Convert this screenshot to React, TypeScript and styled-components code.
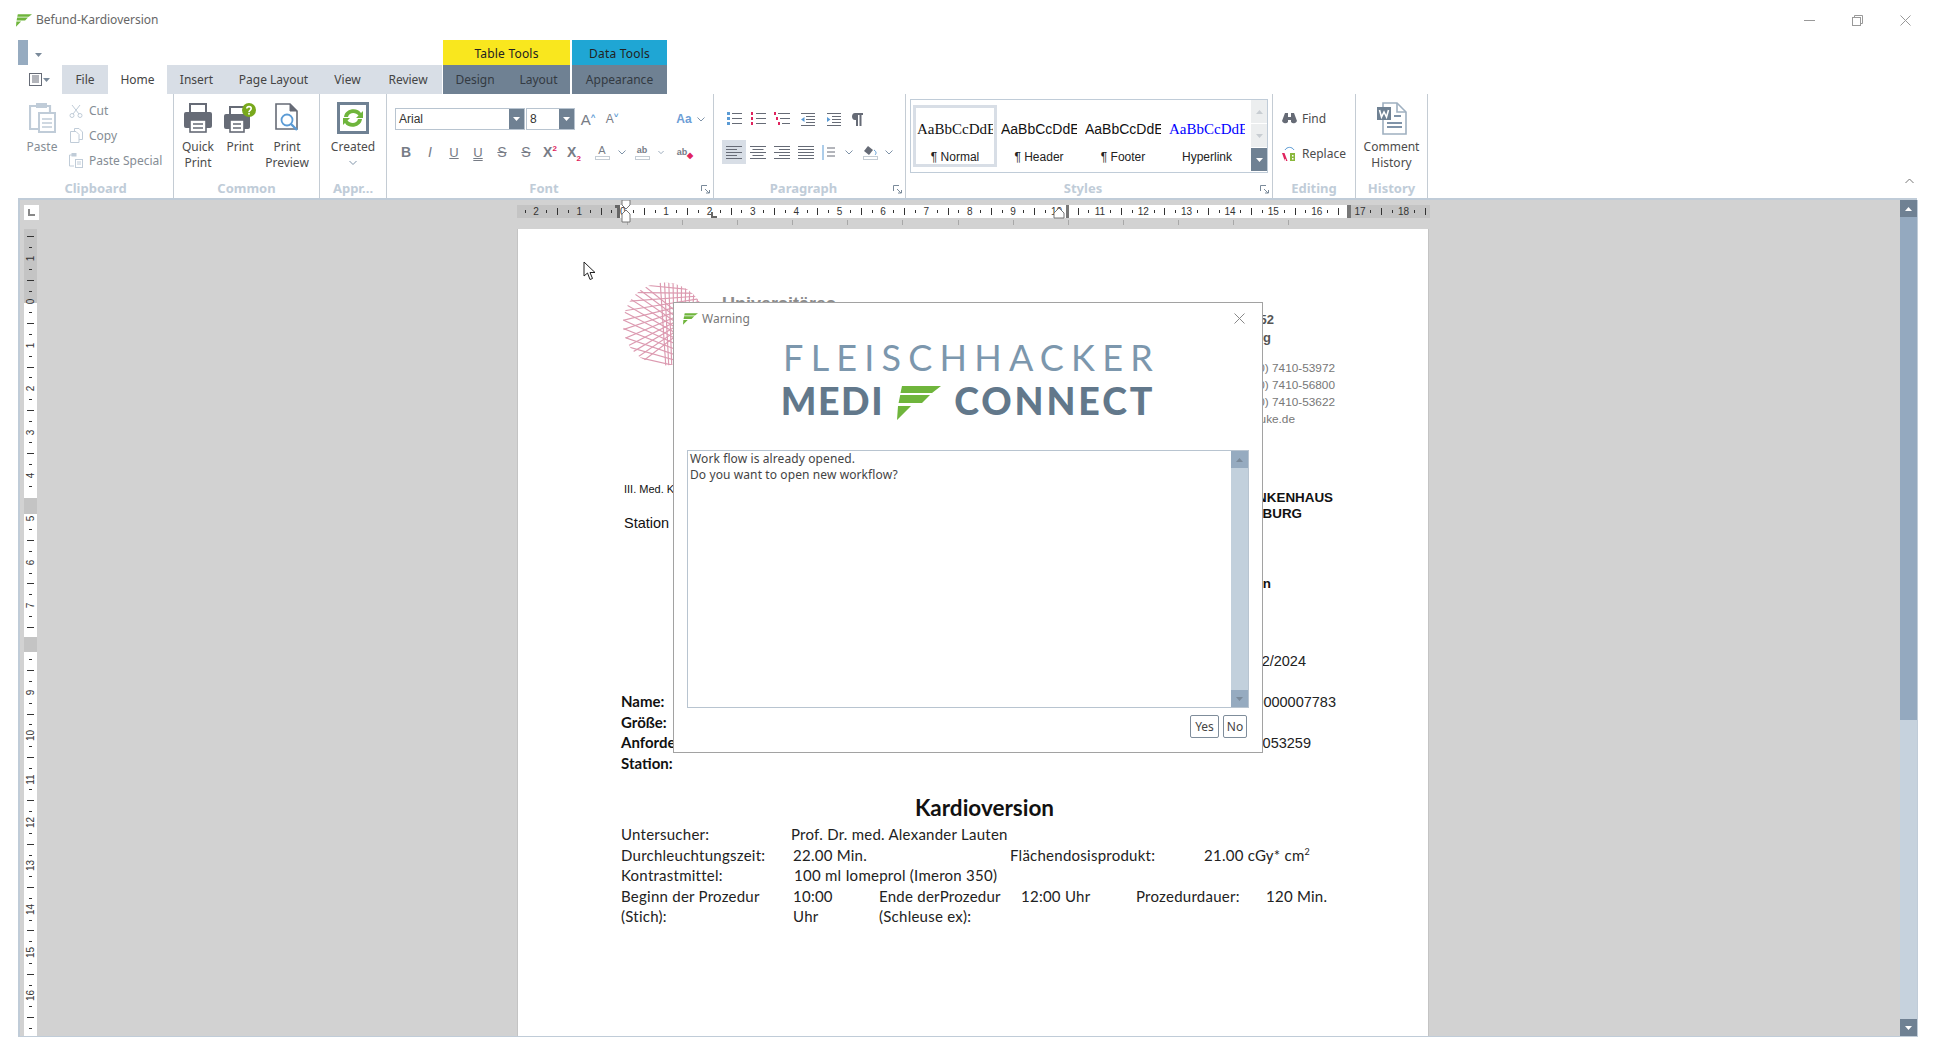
import React from 'react'
import styled, { createGlobalStyle } from 'styled-components'

const uiFont = `"Noto Sans", "Open Sans", sans-serif`
const armFont = `"Liberation Sans", Arial, sans-serif`
const docFont = `Lato, "Open Sans", sans-serif`

const GlobalStyle = createGlobalStyle`
    html, body {
        margin: 0;
        padding: 0;
        background: #fff;
        overflow: hidden;
    }
    * {
        box-sizing: border-box;
    }
`

const Shell = styled.div`
    position: relative;
    width: 1936px;
    height: 1056px;
    display: flex;
    flex-direction: column;
    font-family: ${uiFont};
    font-size: 12px;
    color: #4c4c4c;
    background: #fff;
`

/* window title */
const TitleBar = styled.div`
    height: 40px;
    display: flex;
    align-items: center;
    padding: 0 25px 0 16px;
    gap: 4px;
`
const TitleText = styled.span`
    color: #666;
    margin-bottom: 2px;
`
const WindowButtons = styled.div`
    margin-left: auto;
    display: flex;
    gap: 37px;
    align-items: center;
`

/* quick access + contextual headers */
const ContextRow = styled.div`
    height: 25px;
    padding-left: 18px;
    display: flex;
`
const QuickBlock = styled.div`
    width: 10px;
    background: #96abc0;
`
const QuickArrow = styled.div`
    width: 415px;
    padding: 4px 0 0 7px;
`
const ContextHead = styled.div<{ $w: number; $bg: string }>`
    width: ${p => p.$w}px;
    margin-right: 2px;
    padding-top: 1px;
    background: ${p => p.$bg};
    color: #222;
    letter-spacing: 0.2px;
    display: flex;
    align-items: center;
    justify-content: center;
`

/* tabs */
const TabRow = styled.div`
    height: 29px;
    padding-left: 18px;
    display: flex;
`
const ViewToggle = styled.div`
    width: 44px;
    display: flex;
    align-items: center;
    padding-left: 11px;
    gap: 1px;
`
const Tab = styled.div<{ $w: number; $kind?: 'active' | 'context' }>`
    width: ${p => p.$w}px;
    display: flex;
    align-items: center;
    justify-content: center;
    color: ${p => (p.$kind === 'context' ? '#333a42' : '#444')};
    background: ${p => (p.$kind === 'active' ? '#fff' : p.$kind === 'context' ? '#6f8193' : '#d8dee6')};
`
const TabGap = styled.div<{ $w: number }>`
    width: ${p => p.$w}px;
`

/* ribbon */
const Ribbon = styled.div`
    height: 104px;
    padding-left: 18px;
    display: flex;
`
const Group = styled.div<{ $w: number }>`
    position: relative;
    width: ${p => p.$w}px;
    border-right: 1px solid #c4ccd4;
    display: flex;
    flex-direction: column;
`
const GroupBody = styled.div<{ $pad?: string }>`
    flex: 1;
    display: flex;
    padding: ${p => p.$pad || '0'};
`
const GroupLabel = styled.div<{ $launch?: boolean }>`
    height: 20px;
    line-height: 21px;
    padding-right: ${p => (p.$launch ? 12 : 0)}px;
    text-align: center;
    font-size: 13px;
    font-weight: 700;
    color: #c0ccd8;
`
const Launcher = styled.svg`
    position: absolute;
    right: 3px;
    bottom: 4px;
`
const BigButton = styled.div<{ $w: number; $muted?: boolean }>`
    width: ${p => p.$w}px;
    padding-top: 8px;
    display: flex;
    flex-direction: column;
    align-items: center;
    text-align: center;
    line-height: 16px;
    color: ${p => (p.$muted ? '#858d95' : '#4c4c4c')};
`
const BigIcon = styled.div`
    height: 32px;
    margin-bottom: 5px;
    display: flex;
    align-items: center;
    justify-content: center;
`
const SmallColumn = styled.div`
    padding: 4px 0 0 2px;
    display: flex;
    flex-direction: column;
`
const SmallAction = styled.div<{ $muted?: boolean }>`
    height: 25px;
    display: flex;
    align-items: center;
    gap: 5px;
    color: ${p => (p.$muted ? '#858d95' : '#4c4c4c')};
`
const SmallIcon = styled.span`
    width: 16px;
    display: flex;
    justify-content: center;
`
const ToolStack = styled.div`
    display: flex;
    flex-direction: column;
    gap: 11px;
    padding: 14px 0 0 8px;
`
const ToolRow = styled.div`
    height: 22px;
    display: flex;
    align-items: center;
`
const Tool = styled.div<{ $w?: number; $on?: boolean; $ml?: number }>`
    width: ${p => p.$w || 24}px;
    height: 24px;
    margin-left: ${p => p.$ml || 0}px;
    flex: none;
    display: flex;
    align-items: center;
    justify-content: center;
    background: ${p => (p.$on ? '#d8dee6' : 'transparent')};
`
const Combo = styled.div<{ $w: number }>`
    width: ${p => p.$w}px;
    height: 22px;
    margin-right: 1px;
    border: 1px solid #b8c4d0;
    display: flex;
    align-items: center;
    justify-content: space-between;
    padding-left: 3px;
    font-family: ${armFont};
    font-size: 12px;
    color: #333;
`
const ComboDrop = styled.div`
    width: 15px;
    height: 20px;
    background: #6f8193;
    display: flex;
    align-items: center;
    justify-content: center;
`
const Gallery = styled.div`
    width: 358px;
    height: 74px;
    margin: 5px 0 0 4px;
    border: 1px solid #c0ccd8;
    display: flex;
    padding-left: 2px;
`
const StyleItem = styled.div<{ $on?: boolean }>`
    width: 84px;
    height: 62px;
    margin-top: 5px;
    border: 3px solid ${p => (p.$on ? '#d8dee6' : 'transparent')};
    display: flex;
    flex-direction: column;
    align-items: center;
`
const StyleSample = styled.div<{ $link?: boolean; $sans?: boolean }>`
    width: 76px;
    height: 20px;
    margin-top: 11px;
    overflow: hidden;
    white-space: nowrap;
    font-family: ${p => (p.$sans ? armFont : `"Liberation Serif", serif`)};
    font-size: ${p => (p.$sans ? 14 : 15)}px;
    line-height: 20px;
    color: ${p => (p.$link ? '#0000ff' : '#111')};
`
const StyleName = styled.div`
    margin-top: 12px;
    font-family: ${armFont};
    font-size: 12px;
    color: #222;
`
const GallerySpin = styled.div`
    width: 16px;
    margin-left: auto;
    display: flex;
    flex-direction: column;
`
const SpinStep = styled.div<{ $dark?: boolean; $h: number }>`
    height: ${p => p.$h}px;
    display: flex;
    align-items: center;
    justify-content: center;
    background: ${p => (p.$dark ? '#6f8193' : '#eceeef')};
    border-bottom: 1px solid #fff;
`
const EditColumn = styled.div`
    padding: 12px 0 0 8px;
    display: flex;
    flex-direction: column;
    gap: 9.5px;
`
const CollapseCaret = styled.div`
    margin-left: auto;
    padding: 84px 22px 0 0;
    display: flex;
    align-items: flex-start;
`
const RibbonEdge = styled.div`
    margin-left: 18px;
    width: 1899px;
    height: 2px;
    background: #c0ccd8;
`

/* document workspace */
const DocArea = styled.div`
    margin-left: 18px;
    width: 1900px;
    height: 837px;
    display: flex;
    border-left: 2px solid #c0ccd8;
    border-right: 1px solid #c0ccd8;
    border-bottom: 1px solid #c0ccd8;
    background: #d2d2d2;
`
const Workspace = styled.div`
    flex: 1;
    min-width: 0;
    display: grid;
    grid-template-columns: 497px 912px 1fr;
    grid-template-rows: 29px 1fr;
    overflow: hidden;
`
const CornerCell = styled.div`
    padding: 5px 0 0 4px;
`
const CornerBox = styled.div`
    width: 15px;
    height: 15px;
    background: #fff;
    display: flex;
    align-items: center;
    justify-content: center;
`
const RulerCell = styled.div`
    position: relative;
    padding-top: 5px;
`
const HRuler = styled.div`
    width: 913px;
    height: 13px;
    display: flex;
    padding-left: 2.7px;
    background: linear-gradient(to right, #c4c4c4 100px, #fff 100px, #fff 833px, #c4c4c4 833px);
    overflow: hidden;
`
const HSlot = styled.div`
    width: 10.85px;
    flex: none;
    display: flex;
    align-items: center;
    justify-content: center;
    font-family: ${armFont};
    font-size: 10px;
    color: #333;
`
const HTick = styled.span<{ $long?: boolean }>`
    display: block;
    width: 1px;
    height: ${p => (p.$long ? 7 : 3)}px;
    background: #333;
`
const TableTicks = styled.div`
    width: 716px;
    height: 5px;
    margin: 2px 0 0 110px;
    background: repeating-linear-gradient(to right, #a8a8a8 0, #a8a8a8 1px, transparent 1px, transparent 55.1px);
`
const RulerMarks = styled.svg`
    position: absolute;
    left: 0;
    top: 0;
`
const VRailCell = styled.div`
    padding-left: 4px;
`
const VRuler = styled.div`
    width: 13px;
    height: 808px;
    padding-top: 2.5px;
    overflow: hidden;
    background: linear-gradient(
        to bottom,
        #c4c4c4 74px,
        #fff 74px,
        #fff 269px,
        #c4c4c4 269px,
        #c4c4c4 285px,
        #fff 285px,
        #fff 408px,
        #c4c4c4 408px,
        #c4c4c4 423px,
        #fff 423px
    );
`
const VSlot = styled.div`
    height: 10.85px;
    display: flex;
    align-items: center;
    justify-content: center;
    font-family: ${armFont};
    font-size: 10px;
    color: #333;
`
const VNum = styled.span`
    display: block;
    transform: rotate(-90deg);
`
const VTick = styled.span<{ $long?: boolean }>`
    display: block;
    height: 1px;
    width: ${p => (p.$long ? 7 : 3)}px;
    background: #333;
`
const VScroll = styled.div`
    width: 17px;
    flex: none;
    display: flex;
    flex-direction: column;
    background: #c6d2dd;
`
const ScrollButton = styled.div`
    height: 17px;
    background: #6f8193;
    display: flex;
    align-items: center;
    justify-content: center;
`
const ScrollThumb = styled.div`
    height: 503px;
    background: #94a9bf;
`
const ScrollFill = styled.div`
    flex: 1;
`
const BottomGap = styled.div`
    flex: 1;
`

/* the printed page */
const Page = styled.div`
    background: #fff;
    border-left: 1px solid #c4c4c4;
    border-right: 1px solid #c4c4c4;
    padding: 0 80px 0 103px;
    color: #111;
`
const PageHead = styled.div`
    height: 250px;
    display: flex;
    justify-content: space-between;
`
const LogoSide = styled.div`
    display: flex;
    padding: 52px 0 0 2px;
    gap: 16px;
`
const UniName = styled.div`
    margin-top: 13px;
    font-family: ${armFont};
    font-size: 18px;
    font-weight: 700;
    color: #8c8c8c;
`
const InfoSide = styled.div`
    padding-top: 82px;
    display: flex;
    flex-direction: column;
    align-items: flex-end;
`
const AddressLine = styled.div<{ $end?: number }>`
    height: 18px;
    line-height: 18px;
    padding-right: ${p => p.$end || 74}px;
    font-family: ${armFont};
    font-size: 13px;
    font-weight: 700;
    color: #555;
    white-space: nowrap;
`
const ContactLines = styled.div`
    margin-top: 12.5px;
    display: flex;
    flex-direction: column;
    align-items: flex-end;
`
const ContactLine = styled.div<{ $end?: number }>`
    height: 17px;
    line-height: 17px;
    padding-right: ${p => p.$end || 13}px;
    font-family: ${armFont};
    font-size: 11.8px;
    color: #777;
    white-space: nowrap;
`
const PageMid = styled.div`
    height: 295px;
    display: flex;
    justify-content: space-between;
`
const MidColumn = styled.div<{ $end?: boolean }>`
    display: flex;
    flex-direction: column;
    align-items: ${p => (p.$end ? 'flex-end' : 'flex-start')};
`
const MidLine = styled.div<{ $gap?: number; $h?: number; $end?: number }>`
    height: ${p => p.$h || 20}px;
    line-height: ${p => p.$h || 20}px;
    margin-top: ${p => p.$gap || 0}px;
    padding-right: ${p => p.$end || 0}px;
    white-space: nowrap;
`
const DeptText = styled.span`
    margin-left: 3px;
    font-family: ${armFont};
    font-size: 11px;
`
const WardText = styled.span`
    margin-left: 3px;
    font-family: ${armFont};
    font-size: 14.5px;
`
const FieldName = styled.span`
    font-family: ${docFont};
    font-size: 15px;
    font-weight: 700;
`
const BoldRight = styled.span`
    font-family: ${armFont};
    font-size: 13.4px;
    font-weight: 700;
`
const PlainRight = styled.span`
    font-family: ${armFont};
    font-size: 14.5px;
    color: #222;
`
const ReportTitle = styled.h1`
    margin: 20px 0 0;
    height: 30px;
    line-height: 28px;
    text-align: center;
    font-family: ${docFont};
    font-size: 22.5px;
    font-weight: 700;
`
const ReportRows = styled.div`
    font-family: ${docFont};
    font-size: 15px;
    letter-spacing: 0.25px;
    line-height: 20.5px;
    color: #222;
`
const ReportRow = styled.div`
    display: flex;
`
const ReportCell = styled.div<{ $w?: number; $ml?: number }>`
    width: ${p => (p.$w ? `${p.$w}px` : 'auto')};
    padding-left: ${p => p.$ml || 0}px;
    flex: none;
`
const Sup = styled.sup`
    font-size: 9px;
    line-height: 0;
`

/* warning dialog */
const Dialog = styled.div`
    position: absolute;
    left: 673px;
    top: 302px;
    width: 590px;
    height: 451px;
    background: #fff;
    border: 1px solid #a2a2a2;
    display: flex;
    flex-direction: column;
    padding: 0 13px 14px;
`
const DialogTitle = styled.div`
    height: 31px;
    margin-left: -4px;
    display: flex;
    align-items: center;
    gap: 4px;
    color: #777;
`
const DialogClose = styled.span`
    margin-left: auto;
    margin-right: 4px;
    display: flex;
`
const BrandBlock = styled.div`
    height: 116px;
    display: flex;
    flex-direction: column;
    align-items: center;
`
const BrandTop = styled.div`
    margin-top: 3px;
    height: 40px;
    line-height: 40px;
    font-family: ${docFont};
    font-size: 36px;
    font-weight: 400;
    letter-spacing: 7.2px;
    margin-right: -7px;
    color: #7c97ad;
`
const BrandBottom = styled.div`
    margin-top: 9px;
    display: flex;
    align-items: flex-start;
    gap: 13px;
`
const BrandWord = styled.span<{ $ls: number }>`
    height: 34px;
    line-height: 30px;
    font-family: ${docFont};
    font-size: 37.5px;
    font-weight: 900;
    letter-spacing: ${p => p.$ls}px;
    color: #62788b;
`
const MessageBox = styled.div`
    height: 258px;
    border: 1px solid #b8c4d0;
    display: flex;
`
const MessageText = styled.div`
    flex: 1;
    padding: 0 2px;
    line-height: 16px;
    letter-spacing: 0.1px;
    color: #444;
`
const MessageScroll = styled.div`
    width: 17px;
    background: #c2d0dc;
    display: flex;
    flex-direction: column;
    justify-content: space-between;
`
const MessageStep = styled.div`
    height: 17px;
    background: #96abc0;
    display: flex;
    align-items: center;
    justify-content: center;
`
const DialogActions = styled.div`
    margin-top: 7px;
    display: flex;
    justify-content: flex-end;
    gap: 4px;
    padding-right: 2px;
`
const DialogButton = styled.button<{ $w: number }>`
    width: ${p => p.$w}px;
    height: 23px;
    padding: 0;
    background: #fff;
    border: 1px solid #7f8d9b;
    border-radius: 2px;
    font-family: ${uiFont};
    font-size: 12px;
    color: #444;
`
const Pointer = styled.svg`
    position: absolute;
    left: 583px;
    top: 261px;
`

/* drawings */
const FMark = ({ w = 16, h = 13 }: { w?: number; h?: number }) => (
    <svg width={w} height={h} viewBox="0 0 44 34">
        <path d="M5 0H44L35 7H3.5Z M3.2 9H33L25 17H1.6Z M1 20H14L0 34Z" fill="#6fb53c" />
    </svg>
)
const Down = ({ c = '#7a8a9a' }: { c?: string }) => (
    <svg width="7" height="4" viewBox="0 0 7 4"><path d="M0 0H7L3.5 4Z" fill={c} /></svg>
)
const Up = ({ c = '#7a8a9a' }: { c?: string }) => (
    <svg width="7" height="4" viewBox="0 0 7 4"><path d="M0 4H7L3.5 0Z" fill={c} /></svg>
)
const Chevron = () => (
    <svg width="8" height="5" viewBox="0 0 8 5"><path d="M.5.5 4 4 7.5.5" fill="none" stroke="#7f93a8" /></svg>
)
const PrintBody = ({ w = 28, h = 30 }: { w?: number; h?: number }) => (
    <svg width={w} height={h} viewBox="0 0 28 30">
        <path d="M6 9V1H22V9" fill="none" stroke="#666b76" strokeWidth="2" />
        <rect x="0" y="9" width="28" height="16" rx="2" fill="#666b76" />
        <rect x="6" y="17" width="16" height="12" fill="#fff" stroke="#666b76" strokeWidth="1.6" />
        <path d="M9 21H19M9 25H19" stroke="#666b76" strokeWidth="1.6" />
    </svg>
)
const PrintHelp = () => (
    <svg width="32" height="30" viewBox="0 0 32 30">
        <path d="M6 11V4H20" fill="none" stroke="#666b76" strokeWidth="2" />
        <rect x="0" y="11" width="26" height="15" rx="2" fill="#666b76" />
        <rect x="6" y="17" width="14" height="12" fill="#fff" stroke="#666b76" strokeWidth="1.6" />
        <path d="M9 21H17M9 25H17" stroke="#666b76" strokeWidth="1.6" />
        <circle cx="25" cy="7" r="7" fill="#78a81c" />
        <path d="M22.8 5.5C23 3 27.2 3 27.2 5.6 27.2 7.3 25 7.3 25 9" fill="none" stroke="#fff" strokeWidth="1.6" />
        <rect x="24.2" y="9.8" width="1.6" height="1.8" fill="#fff" />
    </svg>
)
const PrintPreview = () => (
    <svg width="24" height="30" viewBox="0 0 24 30">
        <path d="M1 1H15L22 8V26H1Z" fill="#fff" stroke="#666b76" strokeWidth="1.6" />
        <path d="M15 1V8H22" fill="#666b76" stroke="#666b76" />
        <circle cx="12" cy="17" r="5.5" fill="#fff" stroke="#5b9bd5" strokeWidth="1.8" />
        <path d="M16 21 22 27" stroke="#5b9bd5" strokeWidth="2.4" />
    </svg>
)
const PasteBig = () => (
    <svg width="27" height="30" viewBox="0 0 27 30">
        <path d="M9 3H1V26H9" fill="none" stroke="#c0ccd8" strokeWidth="2.2" />
        <path d="M16 3H21V10" fill="none" stroke="#c0ccd8" strokeWidth="2.2" />
        <rect x="7" y="0" width="11" height="5" fill="#c0ccd8" />
        <rect x="10" y="10" width="16" height="19" fill="#fff" stroke="#c0ccd8" strokeWidth="2" />
        <path d="M13 16H23M13 20H23M13 24H23" stroke="#c0ccd8" strokeWidth="1.6" />
    </svg>
)
const RefreshBox = () => (
    <svg width="32" height="32" viewBox="0 0 32 32">
        <rect x="1.5" y="1.5" width="29" height="29" fill="#fff" stroke="#6f8193" strokeWidth="3" />
        <path d="M7 15C8 6 21 5 24 11L26 9V16H19L21.500 13.500C19 10 12 10 11 15Z" fill="#6fb53c" />
        <path d="M25 17C24 26 11 27 8 21L6 23V16H13L10.500 18.500C13 22 20 22 21 17Z" fill="#6fb53c" />
    </svg>
)
const Scissors = () => (
    <svg width="14" height="14" viewBox="0 0 14 14" fill="none" stroke="#c0ccd8">
        <path d="M3 1 10 10M11 1 4 10" />
        <circle cx="3" cy="11.5" r="2" />
        <circle cx="11" cy="11.5" r="2" />
    </svg>
)
const CopyPages = () => (
    <svg width="13" height="15" viewBox="0 0 13 15" fill="#fff" stroke="#c0ccd8">
        <path d="M4.500.5H9L12.500 4V11.500H4.500Z" />
        <path d="M.5 3.500H6L9 6.500V14.500H.5Z" />
    </svg>
)
const PasteSmall = () => (
    <svg width="14" height="15" viewBox="0 0 14 15" fill="none" stroke="#c0ccd8">
        <path d="M4 2H.5V13H5" />
        <rect x="3" y=".5" width="4" height="2.500" fill="#c0ccd8" />
        <rect x="6.500" y="6.500" width="7" height="8" fill="#fff" />
        <path d="M8 9H12M8 11H12" />
    </svg>
)
const LinesIcon = ({ align }: { align: 'left' | 'center' | 'right' | 'full' }) => {
    const widths = [16, 11, 16, 11, 16]
    return (
        <svg width="16" height="13" viewBox="0 0 16 13">
            {widths.map((w, i) => {
                const bar = align === 'full' ? 16 : w
                const x = align === 'center' ? (16 - bar) / 2 : align === 'right' ? 16 - bar : 0
                return <rect key={i} x={x} y={i * 3} width={bar} height="1" fill="#666b76" />
            })}
        </svg>
    )
}
const ListIcon = ({ kind }: { kind: 'bullet' | 'number' | 'multi' }) => (
    <svg width="16" height="14" viewBox="0 0 16 14">
        {[1, 6, 11].map((y, i) => (
            <g key={y}>
                <rect
                    x={kind === 'multi' ? i * 2 : 1}
                    y={y - 1}
                    width={kind === 'bullet' ? 3 : 2}
                    height="3"
                    fill={kind === 'bullet' ? '#5b9bd5' : '#e0245e'}
                />
                <rect x={kind === 'multi' ? 4 + i * 2 : 6} y={y} width={kind === 'multi' ? 12 - i * 2 : 10} height="1" fill="#666b76" />
            </g>
        ))}
    </svg>
)
const IndentIcon = ({ out }: { out?: boolean }) => (
    <svg width="14" height="13" viewBox="0 0 14 13">
        <path d="M0 .5H14M5 3.500H14M5 6.500H14M5 9.500H14M0 12.500H14" stroke="#666b76" />
        <path d={out ? 'M0 6.500 3.500 4V9Z' : 'M3.500 6.500 0 4V9Z'} fill="#5b9bd5" />
    </svg>
)
const Pilcrow = () => (
    <svg width="13" height="13" viewBox="0 0 13 13">
        <path d="M5 0H13V2H11.500V13H9.500V2H8V13H6V7H5C1 7 1 0 5 0Z" fill="#666b76" />
    </svg>
)
const GlyphText = styled.span<{ $size?: number; $color?: string; $weight?: number; $italic?: boolean; $line?: string }>`
    position: relative;
    font-family: ${armFont};
    font-size: ${p => p.$size || 14}px;
    font-weight: ${p => p.$weight || 400};
    font-style: ${p => (p.$italic ? 'italic' : 'normal')};
    color: ${p => p.$color || '#777c86'};
    text-decoration: ${p => p.$line || 'none'};
`
const GlyphMark = styled.sup<{ $c: string }>`
    font-size: 8px;
    font-weight: 700;
    color: ${p => p.$c};
    line-height: 0;
`
const GlyphLow = styled.sub<{ $c: string }>`
    font-size: 8px;
    font-weight: 700;
    color: ${p => p.$c};
    line-height: 0;
`
const ColorBar = styled.span`
    display: block;
    width: 15px;
    height: 4px;
    border: 1px solid #c4ccd4;
`
const StackGlyph = styled.span`
    display: flex;
    flex-direction: column;
    align-items: center;
    line-height: 11px;
`
const Launch = () => (
    <Launcher width="9" height="9" viewBox="0 0 9 9">
        <path d="M.5 6V.5H6" fill="none" stroke="#7a8a9a" />
        <path d="M4 4 8 8M5 8H8.500V5" fill="none" stroke="#7a8a9a" />
    </Launcher>
)
const Binoculars = () => (
    <svg width="15" height="12" viewBox="0 0 15 12" fill="#666b76">
        <path d="M3 0H6V4H9V0H12L15 8A3.500 3.500 0 0 1 9 9V7H6V9A3.500 3.500 0 0 1 0 8Z" />
    </svg>
)
const ReplaceIcon = () => (
    <svg width="14" height="15" viewBox="0 0 14 15">
        <path d="M3 4C5 .5 10 .5 12 4" fill="none" stroke="#5b9bd5" />
        <path d="M2.800 15 0 7H2.500L5.500 15H4L3.600 13H2.800ZM3 11H2.500" fill="#e0245e" />
        <rect x="8" y="7" width="5" height="8" fill="#8ab83c" />
        <rect x="10" y="9" width="1.500" height="1.500" fill="#fff" />
        <rect x="10" y="12" width="1.500" height="1.500" fill="#fff" />
    </svg>
)
const HistoryDoc = () => (
    <svg width="30" height="33" viewBox="0 0 30 33">
        <path d="M6 1H20L29 10V32H6Z" fill="#fff" stroke="#9fb0c0" strokeWidth="1.6" />
        <path d="M20 1V10H29" fill="none" stroke="#9fb0c0" strokeWidth="1.6" />
        <rect x="0" y="5" width="14" height="13" fill="#6f8193" />
        <path d="M2.500 8 4.500 15 7 10 9.500 15 11.500 8" fill="none" stroke="#fff" strokeWidth="1.6" />
        <path d="M17 14H24M10 21H25M10 25H25" stroke="#7f93a8" strokeWidth="2" />
    </svg>
)
const UkeLogo = () => {
    const fan = Array.from({ length: 12 }, (_, i) => i)
    return (
        <svg width="83" height="86" viewBox="0 0 85 85">
            <defs>
                <clipPath id="uke-disc"><circle cx="42.5" cy="42.5" r="42.5" /></clipPath>
            </defs>
            <g clipPath="url(#uke-disc)" fill="none" stroke="#dc9ab0" strokeWidth="1.2">
                {fan.map(i => <line key={`a${i}`} x1="-5" y1={i * 10 - 10} x2="92" y2={8 + i * 1.6} />)}
                {fan.map(i => <line key={`b${i}`} x1="-5" y1={i * 9 - 18} x2="92" y2={60 + i * 3.4} />)}
                {fan.map(i => <line key={`c${i}`} x1={38 + i * 4.4} y1="-2" x2={44 + i * 3} y2="88" />)}
            </g>
        </svg>
    )
}

/* ruler data */
const hSlots = Array.from({ length: 84 }, (_, i) => i - 1)
const hSlotLabel = (i: number) => {
    const cm = i / 4 - 2
    return Math.abs(cm)
}
const vSlots = Array.from({ length: 74 }, (_, i) => i - 6)
const isCovered = (k: number) => {
    const y = 302 + k * 10.85
    return (y >= 497 && y <= 514) || (y >= 637 && y <= 652)
}

const Sample = ({ name, link, on, sans, mark = true }: { name: string; link?: boolean; on?: boolean; sans?: boolean; mark?: boolean }) => (
    <StyleItem $on={on}>
        <StyleSample $link={link} $sans={sans}>AaBbCcDdEe</StyleSample>
        <StyleName>{mark ? '¶ ' : ''}{name}</StyleName>
    </StyleItem>
)

export default function App() {
    return (
        <Shell>
            <GlobalStyle />
            <TitleBar>
                <FMark />
                <TitleText>Befund-Kardioversion</TitleText>
                <WindowButtons>
                    <svg width="11" height="11" viewBox="0 0 11 11"><path d="M0 5.500H11" stroke="#999" /></svg>
                    <svg width="11" height="11" viewBox="0 0 11 11" fill="none" stroke="#999"><path d="M2.500 2.500V.5H10.500V8.500H8.500" /><rect x=".5" y="2.500" width="8" height="8" /></svg>
                    <svg width="11" height="11" viewBox="0 0 11 11"><path d="M.5.5 10.500 10.500M10.500.5.5 10.500" stroke="#999" /></svg>
                </WindowButtons>
            </TitleBar>

            <ContextRow>
                <QuickBlock />
                <QuickArrow><Down /></QuickArrow>
                <ContextHead $w={127} $bg="#f9e71e">Table Tools</ContextHead>
                <ContextHead $w={95} $bg="#1fa6d4">Data Tools</ContextHead>
            </ContextRow>

            <TabRow>
                <ViewToggle>
                    <svg width="13" height="13" viewBox="0 0 13 13" fill="none" stroke="#666b76"><rect x=".5" y=".5" width="12" height="12" /><path d="M3 3H10M3 5H10M3 7H10M3 9H10" /></svg>
                    <Down />
                </ViewToggle>
                <Tab $w={46}>File</Tab>
                <Tab $w={59} $kind="active">Home</Tab>
                <Tab $w={59}>Insert</Tab>
                <Tab $w={95}>Page Layout</Tab>
                <Tab $w={53}>View</Tab>
                <Tab $w={68}>Review</Tab>
                <TabGap $w={1} />
                <Tab $w={64} $kind="context">Design</Tab>
                <Tab $w={63} $kind="context">Layout</Tab>
                <TabGap $w={2} />
                <Tab $w={95} $kind="context">Appearance</Tab>
            </TabRow>

            <Ribbon>
                <Group $w={156}>
                    <GroupBody>
                        <BigButton $w={48} $muted>
                            <BigIcon><PasteBig /></BigIcon>
                            Paste
                        </BigButton>
                        <SmallColumn>
                            <SmallAction $muted><SmallIcon><Scissors /></SmallIcon>Cut</SmallAction>
                            <SmallAction $muted><SmallIcon><CopyPages /></SmallIcon>Copy</SmallAction>
                            <SmallAction $muted><SmallIcon><PasteSmall /></SmallIcon>Paste Special</SmallAction>
                        </SmallColumn>
                    </GroupBody>
                    <GroupLabel>Clipboard</GroupLabel>
                </Group>
                <Group $w={146}>
                    <GroupBody>
                        <BigButton $w={48}><BigIcon><PrintBody /></BigIcon>Quick<br />Print</BigButton>
                        <BigButton $w={36}><BigIcon><PrintHelp /></BigIcon>Print</BigButton>
                        <BigButton $w={58}><BigIcon><PrintPreview /></BigIcon>Print<br />Preview</BigButton>
                    </GroupBody>
                    <GroupLabel>Common</GroupLabel>
                </Group>
                <Group $w={67}>
                    <GroupBody>
                        <BigButton $w={66}>
                            <BigIcon><RefreshBox /></BigIcon>
                            Created
                            <svg width="8" height="16" viewBox="0 0 8 16"><path d="M.5 6 4 9.500 7.500 6" fill="none" stroke="#7f93a8" /></svg>
                        </BigButton>
                    </GroupBody>
                    <GroupLabel>Appr...</GroupLabel>
                </Group>
                <Group $w={327}>
                    <GroupBody>
                        <ToolStack>
                            <ToolRow>
                                <Combo $w={130}>Arial<ComboDrop><Down c="#fff" /></ComboDrop></Combo>
                                <Combo $w={49}>8<ComboDrop><Down c="#fff" /></ComboDrop></Combo>
                                <Tool><GlyphText $size={15}>A<GlyphMark $c="#5b9bd5">˄</GlyphMark></GlyphText></Tool>
                                <Tool><GlyphText $size={12}>A<GlyphMark $c="#5b9bd5">˅</GlyphMark></GlyphText></Tool>
                                <Tool $w={22} $ml={49}><GlyphText $size={12} $weight={700} $color="#6d9ed6">Aa</GlyphText></Tool>
                                <Tool $w={12}><Chevron /></Tool>
                            </ToolRow>
                            <ToolRow>
                                <Tool $ml={-1}><GlyphText $size={14} $weight={700}>B</GlyphText></Tool>
                                <Tool><GlyphText $size={14} $italic>I</GlyphText></Tool>
                                <Tool><GlyphText $size={13} $line="underline">U</GlyphText></Tool>
                                <Tool><GlyphText $size={13} $line="underline double">U</GlyphText></Tool>
                                <Tool><GlyphText $size={14} $line="line-through">S</GlyphText></Tool>
                                <Tool><GlyphText $size={14} $line="line-through">S</GlyphText></Tool>
                                <Tool><GlyphText $size={14} $weight={700}>X<GlyphMark $c="#e0245e">2</GlyphMark></GlyphText></Tool>
                                <Tool><GlyphText $size={14} $weight={700}>X<GlyphLow $c="#e0245e">2</GlyphLow></GlyphText></Tool>
                                <Tool $w={32}><StackGlyph><GlyphText $size={11}>A</GlyphText><ColorBar /></StackGlyph></Tool>
                                <Tool $w={8}><Chevron /></Tool>
                                <Tool $w={32}><StackGlyph><GlyphText $size={9} $weight={700}>ab</GlyphText><ColorBar /></StackGlyph></Tool>
                                <Tool $w={6}><Chevron /></Tool>
                                <Tool $w={42}><GlyphText $size={9} $weight={700}>ab<GlyphLow $c="#e0245e">◆</GlyphLow></GlyphText></Tool>
                            </ToolRow>
                        </ToolStack>
                    </GroupBody>
                    <GroupLabel $launch>Font</GroupLabel>
                    <Launch />
                </Group>
                <Group $w={192}>
                    <GroupBody>
                        <ToolStack>
                            <ToolRow>
                                <Tool><ListIcon kind="bullet" /></Tool>
                                <Tool><ListIcon kind="number" /></Tool>
                                <Tool><ListIcon kind="multi" /></Tool>
                                <Tool $w={28}><IndentIcon out /></Tool>
                                <Tool><IndentIcon /></Tool>
                                <Tool $w={20}><Pilcrow /></Tool>
                            </ToolRow>
                            <ToolRow>
                                <Tool $on><LinesIcon align="left" /></Tool>
                                <Tool><LinesIcon align="center" /></Tool>
                                <Tool><LinesIcon align="right" /></Tool>
                                <Tool><LinesIcon align="full" /></Tool>
                                <Tool $w={20}>
                                    <svg width="14" height="15" viewBox="0 0 14 15">
                                        <path d="M2 0V15" stroke="#5b9bd5" />
                                        <path d="M6 3H14M6 7H14M6 11H14" stroke="#666b76" />
                                    </svg>
                                </Tool>
                                <Tool $w={22}><Chevron /></Tool>
                                <Tool $w={20}>
                                    <svg width="15" height="15" viewBox="0 0 15 15">
                                        <path d="M1 6 5 1 10 5 6 10Z" fill="#666b76" />
                                        <path d="M11 5C14 7 13 9 12 10" fill="none" stroke="#5b9bd5" />
                                        <rect x=".5" y="11.500" width="14" height="3" fill="none" stroke="#c4ccd4" />
                                    </svg>
                                </Tool>
                                <Tool $w={18}><Chevron /></Tool>
                            </ToolRow>
                        </ToolStack>
                    </GroupBody>
                    <GroupLabel $launch>Paragraph</GroupLabel>
                    <Launch />
                </Group>
                <Group $w={367}>
                    <GroupBody>
                        <Gallery>
                            <Sample name="Normal" on />
                            <Sample name="Header" sans />
                            <Sample name="Footer" sans />
                            <Sample name="Hyperlink" link mark={false} />
                            <GallerySpin>
                                <SpinStep $h={24}><Up c="#c8cdd2" /></SpinStep>
                                <SpinStep $h={24}><Down c="#c8cdd2" /></SpinStep>
                                <SpinStep $h={24} $dark><Down c="#fff" /></SpinStep>
                            </GallerySpin>
                        </Gallery>
                    </GroupBody>
                    <GroupLabel $launch>Styles</GroupLabel>
                    <Launch />
                </Group>
                <Group $w={83}>
                    <GroupBody>
                        <EditColumn>
                            <SmallAction><SmallIcon><Binoculars /></SmallIcon>Find</SmallAction>
                            <SmallAction><SmallIcon><ReplaceIcon /></SmallIcon>Replace</SmallAction>
                        </EditColumn>
                    </GroupBody>
                    <GroupLabel>Editing</GroupLabel>
                </Group>
                <Group $w={72}>
                    <GroupBody>
                        <BigButton $w={71}>
                            <BigIcon><HistoryDoc /></BigIcon>
                            Comment<br />History
                        </BigButton>
                    </GroupBody>
                    <GroupLabel>History</GroupLabel>
                </Group>
                <CollapseCaret>
                    <svg width="9" height="6" viewBox="0 0 9 6"><path d="M.5 5 4.500 1 8.500 5" fill="none" stroke="#777" /></svg>
                </CollapseCaret>
            </Ribbon>
            <RibbonEdge />

            <DocArea>
                <Workspace>
                    <CornerCell>
                        <CornerBox>
                            <svg width="7" height="7" viewBox="0 0 7 7"><path d="M0 0H2V5H7V7H0Z" fill="#888" /></svg>
                        </CornerBox>
                    </CornerCell>
                    <RulerCell>
                        <HRuler>
                            {hSlots.map(i => (
                                <HSlot key={i}>
                                    {i % 4 === 0
                                        ? hSlotLabel(i)
                                        : <HTick $long={Math.abs(i % 4) === 2} />}
                                </HSlot>
                            ))}
                        </HRuler>
                        <TableTicks />
                        <RulerMarks width="913" height="29" viewBox="0 0 913 29">
                            <path d="M98 5H103V18H100V8H98Z" fill="#666" />
                            <path d="M105 0H113V5L109 9L105 5Z M105 22V14L109 10L113 14V22Z" fill="#fff" stroke="#777" />
                            <path d="M194 12V18H200V16H196V12Z" fill="#666" />
                            <path d="M537 18V13L542 8L547 13V18Z" fill="#fff" stroke="#777" />
                            <path d="M549 5H552V18H549Z" fill="#777" />
                            <path d="M830 5H834V18H830Z" fill="#777" />
                        </RulerMarks>
                    </RulerCell>
                    <div />
                    <VRailCell>
                        <VRuler>
                            {vSlots.map(k => (
                                <VSlot key={k}>
                                    {isCovered(k) ? null : k % 4 === 0
                                        ? <VNum>{Math.abs(k / 4)}</VNum>
                                        : <VTick $long={Math.abs(k % 4) === 2} />}
                                </VSlot>
                            ))}
                        </VRuler>
                    </VRailCell>
                    <Page>
                        <PageHead>
                            <LogoSide>
                                <UkeLogo />
                                <UniName>Universitäres</UniName>
                            </LogoSide>
                            <InfoSide>
                                <AddressLine>Martinistraße 52</AddressLine>
                                <AddressLine $end={77}>20246 Hamburg</AddressLine>
                                <ContactLines>
                                    <ContactLine>Telefon: (040) 7410-53972</ContactLine>
                                    <ContactLine>Telefax: (040) 7410-56800</ContactLine>
                                    <ContactLine>Telefon: (040) 7410-53622</ContactLine>
                                    <ContactLine $end={53}>info@uke.de</ContactLine>
                                </ContactLines>
                            </InfoSide>
                        </PageHead>
                        <PageMid>
                            <MidColumn>
                                <MidLine><DeptText>III. Med. Klinik</DeptText></MidLine>
                                <MidLine $gap={14}><WardText>Station</WardText></MidLine>
                                <MidLine $gap={158}><FieldName>Name:</FieldName></MidLine>
                                <MidLine $gap={1}><FieldName>Größe:</FieldName></MidLine>
                                <MidLine><FieldName>Anforderung:</FieldName></MidLine>
                                <MidLine $gap={1}><FieldName>Station:</FieldName></MidLine>
                            </MidColumn>
                            <MidColumn $end>
                                <MidLine $gap={11} $h={16} $end={15}><BoldRight>UNIVERSITÄTSKRANKENHAUS</BoldRight></MidLine>
                                <MidLine $h={16} $end={46}><BoldRight>HAMBURG</BoldRight></MidLine>
                                <MidLine $gap={52} $end={77}><BoldRight>Kardiologie Station</BoldRight></MidLine>
                                <MidLine $gap={57} $end={42}><PlainRight>02/12/2024</PlainRight></MidLine>
                                <MidLine $gap={21} $end={12}><PlainRight>0000007783</PlainRight></MidLine>
                                <MidLine $gap={21} $end={37}><PlainRight>1053259</PlainRight></MidLine>
                            </MidColumn>
                        </PageMid>
                        <ReportTitle>Kardioversion</ReportTitle>
                        <ReportRows>
                            <ReportRow>
                                <ReportCell $w={170}>Untersucher:</ReportCell>
                                <ReportCell>Prof. Dr. med. Alexander Lauten</ReportCell>
                            </ReportRow>
                            <ReportRow>
                                <ReportCell $w={170}>Durchleuchtungszeit:</ReportCell>
                                <ReportCell $w={219} $ml={2}>22.00 Min.</ReportCell>
                                <ReportCell $w={194}>Flächendosisprodukt:</ReportCell>
                                <ReportCell>21.00 cGy* cm<Sup>2</Sup></ReportCell>
                            </ReportRow>
                            <ReportRow>
                                <ReportCell $w={170}>Kontrastmittel:</ReportCell>
                                <ReportCell $ml={3}>100 ml Iomeprol (Imeron 350)</ReportCell>
                            </ReportRow>
                            <ReportRow>
                                <ReportCell $w={170}>Beginn der Prozedur<br />(Stich):</ReportCell>
                                <ReportCell $w={88} $ml={2}>10:00<br />Uhr</ReportCell>
                                <ReportCell $w={142}>Ende derProzedur<br />(Schleuse ex):</ReportCell>
                                <ReportCell $w={115}>12:00 Uhr</ReportCell>
                                <ReportCell $w={130}>Prozedurdauer:</ReportCell>
                                <ReportCell>120 Min.</ReportCell>
                            </ReportRow>
                        </ReportRows>
                    </Page>
                </Workspace>
                <VScroll>
                    <ScrollButton><Up c="#fff" /></ScrollButton>
                    <ScrollThumb />
                    <ScrollFill />
                    <ScrollButton><Down c="#fff" /></ScrollButton>
                </VScroll>
            </DocArea>
            <BottomGap />

            <Pointer width="13" height="20" viewBox="0 0 13 20">
                <path d="M1 1V15L4.500 12L7 18.500L9.500 17.500L7 11.500H12Z" fill="#fff" stroke="#222" />
            </Pointer>

            <Dialog>
                <DialogTitle>
                    <FMark w={15} h={12} />
                    Warning
                    <DialogClose>
                        <svg width="11" height="11" viewBox="0 0 11 11"><path d="M.5.5 10.500 10.500M10.500.5.5 10.500" stroke="#888" /></svg>
                    </DialogClose>
                </DialogTitle>
                <BrandBlock>
                    <BrandTop>FLEISCHHACKER</BrandTop>
                    <BrandBottom>
                        <BrandWord $ls={1.6}>MEDI</BrandWord>
                        <FMark w={44} h={34} />
                        <BrandWord $ls={2.9}>CONNECT</BrandWord>
                    </BrandBottom>
                </BrandBlock>
                <MessageBox>
                    <MessageText>
                        Work flow is already opened.<br />
                        Do you want to open new workflow?
                    </MessageText>
                    <MessageScroll>
                        <MessageStep><Up /></MessageStep>
                        <MessageStep><Down /></MessageStep>
                    </MessageScroll>
                </MessageBox>
                <DialogActions>
                    <DialogButton $w={29}>Yes</DialogButton>
                    <DialogButton $w={24}>No</DialogButton>
                </DialogActions>
            </Dialog>
        </Shell>
    )
}
